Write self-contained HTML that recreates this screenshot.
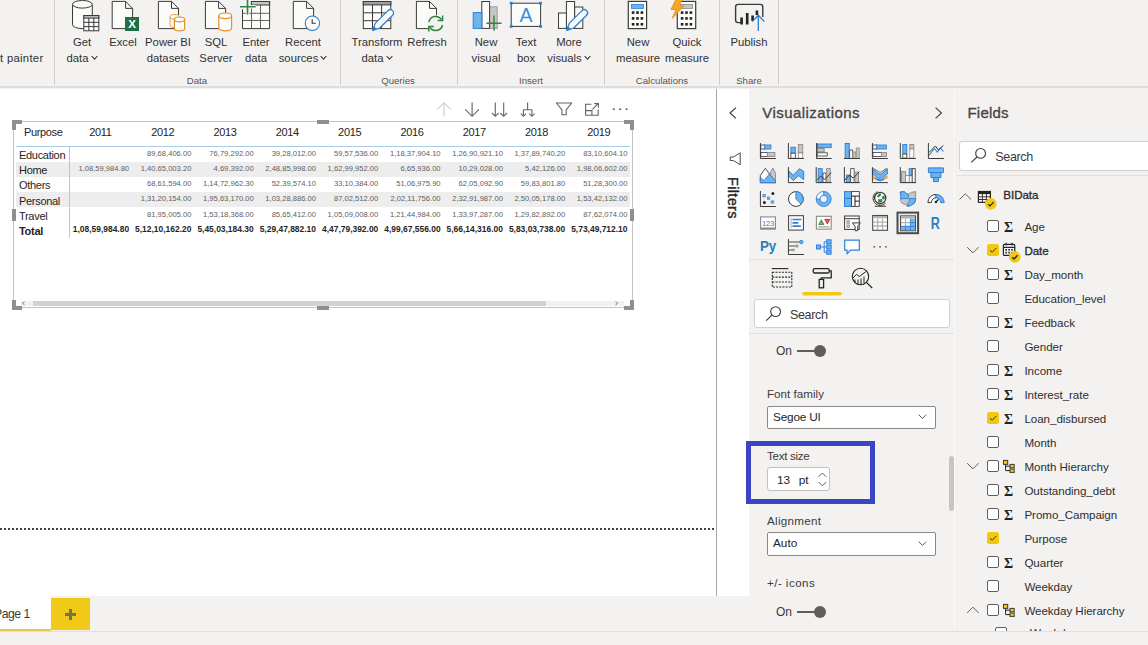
<!DOCTYPE html>
<html lang="en">
<head>
<meta charset="utf-8">
<title>Power BI Desktop</title>
<style>
*{box-sizing:border-box;margin:0;padding:0}
html,body{width:1148px;height:645px;overflow:hidden}
body{background:#f3f2f1;font-family:"Liberation Sans",sans-serif;color:#252423;position:relative;font-size:12px}
.abs{position:absolute}
/* ribbon */
#ribbon{position:absolute;left:0;top:0;width:1148px;height:88px;background:#f3f2f1;border-bottom:2px solid #dfdddb}
.rsep{position:absolute;top:0;width:1px;height:85px;background:#cfcdcb}
.rlbl{position:absolute;top:34px;width:90px;margin-left:-45px;text-align:center;font-size:11.3px;line-height:16px;color:#32312f;white-space:nowrap}
.glbl{position:absolute;top:75px;width:90px;margin-left:-45px;text-align:center;font-size:9.6px;line-height:12px;color:#55534f;white-space:nowrap}
.ric{position:absolute;top:0;overflow:visible}
.chev{display:inline-block;width:5px;height:5px;border-right:1.3px solid #2b2a29;border-bottom:1.3px solid #2b2a29;transform:rotate(45deg) scale(.9);margin:0 1px 3px 3px}
/* canvas */
#canvas{position:absolute;left:0;top:89px;width:716px;height:507px;background:#fff}

/* visual */
#vis{position:absolute;left:13px;top:32px;width:620px;height:187px;border:1px solid #c4c4c4}
.hd{position:absolute;background:#8f8f8f}
.mx{position:absolute;font-size:11px;line-height:15px;color:#252423;white-space:nowrap;letter-spacing:-.35px}
.yr{position:absolute;top:35px;width:62.3px;text-align:center;font-size:11px;line-height:15px;color:#252423;letter-spacing:-.35px}
.band{position:absolute;left:16px;width:614px;height:14.6px;background:#ededed}
.rl{position:absolute;left:19px;font-size:11px;line-height:15px;color:#252423;letter-spacing:-.3px;margin-top:1.3px}
.v{position:absolute;width:62.3px;text-align:right;font-size:7.6px;line-height:12px;color:#605e5c;white-space:nowrap;margin-top:.5px}
.v.t{font-weight:bold;color:#252423;font-size:8.45px;letter-spacing:0;margin-top:-.4px}
.vi{position:absolute;top:0;left:0;overflow:visible}

.ptitle{position:absolute;font-size:15px;line-height:18px;color:#484644;-webkit-text-stroke:.35px #484644;white-space:nowrap}
.hr{position:absolute;height:1px;background:#e3e1df}
.sbox{position:absolute;background:#fff;border:1px solid #d2d0ce;border-radius:3px}
.stxt{position:absolute;font-size:12.6px;line-height:16px;color:#3b3a39;white-space:nowrap;letter-spacing:-.4px;margin-top:1px}
.lbl{position:absolute;left:18px;font-size:11.6px;line-height:14px;color:#3b3a39;white-space:nowrap;letter-spacing:-.1px}
.sel{position:absolute;left:18px;width:169px;height:23px;background:#fff;border:1px solid #8a8886;border-radius:2px;font-size:11.8px;line-height:21px;padding-left:5px;color:#252423}
.on{position:absolute;left:27px;font-size:12px;line-height:14px;color:#3b3a39}
.tgl{position:absolute;left:47.5px;width:24px;height:2px;background:#605e5c}
.tgl:after{content:"";position:absolute;left:17.3px;top:-5.2px;width:12.4px;height:12.4px;border-radius:50%;background:#605e5c}

.cb{position:absolute;width:11.6px;height:11.6px;border:1px solid #605e5c;border-radius:2px;background:#fff}
.cb.on{background:#f2c811;border-color:#f2c811}
.ft{position:absolute;left:68.4px;font-size:11.6px;line-height:14px;color:#252423;white-space:nowrap;letter-spacing:-.05px}
.ft.b{-webkit-text-stroke:.3px #252423}
.ft{color:#2f2e2d}
.sg{position:absolute;left:48px;margin-top:2.5px;font-family:"Liberation Serif",serif;font-weight:bold;font-size:14px;line-height:14px;color:#252423}
#cline{position:absolute;left:716px;top:89px;width:1px;height:507px;background:#a6a6a6}
#filters{position:absolute;left:717px;top:89px;width:32px;height:507px;background:#fff}
#viz{position:absolute;left:749px;top:89px;width:205px;height:542px;background:#f3f2f1}
#gap{position:absolute;left:953.6px;top:89px;width:1.8px;height:542px;background:#faf9f8}
#fields{position:absolute;left:956px;top:89px;width:192px;height:542px;background:#f3f2f1}
#tabs{position:absolute;left:0;top:596px;width:749px;height:35px;background:#f3f2f1}
#status{position:absolute;left:0;top:631px;width:1148px;height:14px;background:#f3f2f1;border-top:1px solid #e1dfdd}
</style>
</head>
<body>
<div id="ribbon">
<div class="rsep" style="left:54px"></div>
<div class="rsep" style="left:340px"></div>
<div class="rsep" style="left:457px"></div>
<div class="rsep" style="left:604px"></div>
<div class="rsep" style="left:719px"></div>
<div class="rsep" style="left:778px"></div>
<div class="rlbl" style="left:0px;top:50px;letter-spacing:.3px;text-align:left;margin-left:0">t painter</div>
<div class="rlbl" style="left:82px">Get<br>data<i class="chev"></i></div>
<div class="rlbl" style="left:123px">Excel</div>
<div class="rlbl" style="left:168px">Power BI<br>datasets</div>
<div class="rlbl" style="left:216px">SQL<br>Server</div>
<div class="rlbl" style="left:256px">Enter<br>data</div>
<div class="rlbl" style="left:303px">Recent<br>sources<i class="chev"></i></div>
<div class="rlbl" style="left:377px">Transform<br>data<i class="chev"></i></div>
<div class="rlbl" style="left:427px">Refresh</div>
<div class="rlbl" style="left:486px">New<br>visual</div>
<div class="rlbl" style="left:526px">Text<br>box</div>
<div class="rlbl" style="left:569px">More<br>visuals<i class="chev"></i></div>
<div class="rlbl" style="left:638px">New<br>measure</div>
<div class="rlbl" style="left:687px">Quick<br>measure</div>
<div class="rlbl" style="left:749px">Publish</div>
<div class="glbl" style="left:197px">Data</div>
<div class="glbl" style="left:398px">Queries</div>
<div class="glbl" style="left:531px">Insert</div>
<div class="glbl" style="left:662px">Calculations</div>
<div class="glbl" style="left:749px">Share</div>
<svg class="ric" style="left:0" width="1148" height="88" viewBox="0 0 1148 88" fill="none"><path d="M72.5 4.3V24.8A9.899999999999999 3.8 0 0 0 92.3 24.8V4.3" fill="#fbfbfa" stroke="#3b3a39" stroke-width="1"/><ellipse cx="82.4" cy="4.3" rx="9.899999999999999" ry="3.8" fill="#fbfbfa" stroke="#3b3a39" stroke-width="1"/><rect x="83.8" y="15.5" width="15.0" height="15.3" fill="#fbfbfa" stroke="#3b3a39"/><rect x="83.8" y="15.5" width="15.0" height="2.6" fill="#bebbb8" stroke="#3b3a39"/><path d="M88.8 18.1V30.8" stroke="#3b3a39"/><path d="M93.8 18.1V30.8" stroke="#3b3a39"/><path d="M83.8 22.3H98.8" stroke="#3b3a39"/><path d="M83.8 26.6H98.8" stroke="#3b3a39"/><path d="M112.2 1.4H125.6L132.6 8.4V28.6H112.2Z" fill="#fbfbfa" stroke="#3b3a39"/><path d="M125.6 1.4V8.4H132.6" fill="none" stroke="#3b3a39"/><rect x="125" y="17" width="14" height="14" fill="#1e7145"/><text x="132" y="28.3" font-family="Liberation Sans,sans-serif" font-weight="bold" font-size="11.5" fill="#fff" text-anchor="middle">X</text><path d="M158.4 1.4H171.5L178.5 8.4V28.6H158.4Z" fill="#fbfbfa" stroke="#3b3a39"/><path d="M171.5 1.4V8.4H178.5" fill="none" stroke="#3b3a39"/><path d="M170 16.8V25.3A4.799999999999997 2.2 0 0 0 179.6 25.3V16.8" fill="#fbfbfa" stroke="#eb9a40" stroke-width="1"/><ellipse cx="174.8" cy="16.8" rx="4.799999999999997" ry="2.2" fill="#fbfbfa" stroke="#eb9a40" stroke-width="1"/><path d="M174.4 19.4V28.400000000000002A5.099999999999994 2.4 0 0 0 184.6 28.400000000000002V19.4" fill="#fbfbfa" stroke="#e8912d" stroke-width="1.2"/><ellipse cx="179.5" cy="19.4" rx="5.099999999999994" ry="2.4" fill="#fbfbfa" stroke="#e8912d" stroke-width="1.2"/><path d="M205.4 1.4H218.6L225.6 8.4V28.6H205.4Z" fill="#fbfbfa" stroke="#3b3a39"/><path d="M218.6 1.4V8.4H225.6" fill="none" stroke="#3b3a39"/><path d="M218.8 15.8V28.0A6.3999999999999915 2.8 0 0 0 231.6 28.0V15.8" fill="#fbfbfa" stroke="#e8912d" stroke-width="1.2"/><ellipse cx="225.2" cy="15.8" rx="6.3999999999999915" ry="2.8" fill="#fbfbfa" stroke="#e8912d" stroke-width="1.2"/><path d="M251 1.5H269.6V28.6H242.5V9.2" fill="#fbfbfa" stroke="#3b3a39"/><rect x="251.3" y="1.5" width="18.3" height="3.5" fill="#c8c6c4" stroke="#3b3a39"/><path d="M251.5 5V28.6M260.5 5V28.6M242.5 13.3H269.6M242.5 20.5H269.6" stroke="#55534f" stroke-width=".9"/><path d="M240 6.8H255.6M247.5 -1V14.6" stroke="#f3f2f1" stroke-width="3.6" fill="none"/><path d="M240 6.8H255.6M247.5 -1V14.6" stroke="#2e8540" stroke-width="1.6" fill="none"/><path d="M293.3 1.4H306.6L313.6 8.4V28.6H293.3Z" fill="#fbfbfa" stroke="#3b3a39"/><path d="M306.6 1.4V8.4H313.6" fill="none" stroke="#3b3a39"/><circle cx="312.4" cy="23.2" r="7.2" fill="#fbfbfa" stroke="#2f80c0" stroke-width="1.1"/><path d="M312.2 19.2V23.2H315.8" stroke="#3b3a39" stroke-width="1.1" fill="none"/><rect x="363.3" y="1.5" width="27.5" height="27.1" fill="#fbfbfa" stroke="#3b3a39"/><rect x="363.3" y="1.5" width="27.5" height="3.4" fill="#a19f9d" stroke="#3b3a39"/><path d="M372.5 4.9V28.6" stroke="#3b3a39"/><path d="M381.6 4.9V28.6" stroke="#3b3a39"/><path d="M363.3 12.8H390.8" stroke="#3b3a39"/><path d="M363.3 20.7H390.8" stroke="#3b3a39"/><path d="M372.8 30.3L379.7 28.0L392.6 15.2A3.2 3.2 0 0 0 388.0 10.6L375.2 23.4Z" fill="#fbfbfa" stroke="#2f7ed8" stroke-width="1.3" stroke-linejoin="round"/><path d="M372.8 30.3L376.3 29.0L374.1 26.8Z" fill="#2f7ed8" stroke="#2f7ed8" stroke-width="1"/><path d="M416.4 1.4H429.5L436.5 8.4V28.6H416.4Z" fill="#fbfbfa" stroke="#3b3a39"/><path d="M429.5 1.4V8.4H436.5" fill="none" stroke="#3b3a39"/><circle cx="435.7" cy="23.5" r="8.6" fill="#f3f2f1"/><path d="M428.9 22A7 7 0 0 1 441.6 19.6" stroke="#2e8540" stroke-width="1.5" fill="none"/><path d="M442.6 15.6V20.6H437.6" stroke="#2e8540" stroke-width="1.5" fill="none"/><path d="M442.5 25A7 7 0 0 1 429.8 27.4" stroke="#2e8540" stroke-width="1.5" fill="none"/><path d="M428.8 31.4V26.4H433.8" stroke="#2e8540" stroke-width="1.5" fill="none"/><rect x="489.4" y="6.8" width="7.8" height="21.6" fill="#c8c6c4" stroke="#a19f9d"/><rect x="481.8" y="1.5" width="7.8" height="26.9" fill="#fbfbfa" stroke="#3b3a39"/><rect x="473.2" y="12.6" width="8.6" height="15.8" fill="#6cb4ee" stroke="#2f7ed8"/><path d="M486.4 23.2H501.6M494 15.6V30.799999999999997" stroke="#2e8540" stroke-width="1.4" fill="none"/><rect x="511.2" y="3.2" width="29.4" height="23.2" fill="#fbfbfa" stroke="#3b3a39"/><rect x="509.8" y="1.8000000000000003" width="2.8" height="2.8" fill="#2f7ed8"/><rect x="539.2" y="1.8000000000000003" width="2.8" height="2.8" fill="#2f7ed8"/><rect x="509.8" y="25.0" width="2.8" height="2.8" fill="#2f7ed8"/><rect x="539.2" y="25.0" width="2.8" height="2.8" fill="#2f7ed8"/><text x="525.9" y="21.8" font-family="Liberation Sans,sans-serif" font-size="19.5" fill="#3a8ddb" text-anchor="middle">A</text><rect x="574.6" y="7" width="8.2" height="21.4" fill="#fbfbfa" stroke="#3b3a39"/><rect x="558.5" y="13" width="8" height="15.4" fill="#fbfbfa" stroke="#3b3a39"/><rect x="566.4" y="1.5" width="8.2" height="26.9" fill="#fbfbfa" stroke="#3b3a39"/><path d="M566.8 30.3L573.7 28.0L586.6 15.2A3.2 3.2 0 0 0 582.0 10.6L569.2 23.4Z" fill="#fbfbfa" stroke="#2f7ed8" stroke-width="1.3" stroke-linejoin="round"/><path d="M566.8 30.3L570.3 29.0L568.1 26.8Z" fill="#2f7ed8" stroke="#2f7ed8" stroke-width="1"/><rect x="628.3" y="1.4" width="18.300000000000068" height="27.200000000000003" fill="#fbfbfa" stroke="#3b3a39" stroke-width="1.2"/><rect x="631.5" y="4.4" width="11.900000000000068" height="4" fill="#6cb4ee" stroke="#2f7ed8" stroke-width="0.8"/><rect x="631.8" y="11.3" width="2.6" height="2.6" fill="#252423"/><rect x="631.8" y="17.1" width="2.6" height="2.6" fill="#252423"/><rect x="631.8" y="23.0" width="2.6" height="2.6" fill="#252423"/><rect x="636.2" y="11.3" width="2.6" height="2.6" fill="#252423"/><rect x="636.2" y="17.1" width="2.6" height="2.6" fill="#252423"/><rect x="636.2" y="23.0" width="2.6" height="2.6" fill="#252423"/><rect x="640.6" y="11.3" width="2.6" height="2.6" fill="#252423"/><rect x="640.6" y="17.1" width="2.6" height="2.6" fill="#252423"/><rect x="640.6" y="23.0" width="2.6" height="2.6" fill="#252423"/><rect x="677.3" y="1.4" width="18.40000000000009" height="27.200000000000003" fill="#fbfbfa" stroke="#3b3a39" stroke-width="1.2"/><rect x="680.5" y="4.4" width="12.00000000000009" height="4" fill="#c8c6c4" stroke="#8a8886" stroke-width="0.8"/><rect x="680.8" y="11.3" width="2.6" height="2.6" fill="#252423"/><rect x="680.8" y="17.1" width="2.6" height="2.6" fill="#252423"/><rect x="680.8" y="23.0" width="2.6" height="2.6" fill="#252423"/><rect x="685.2" y="11.3" width="2.6" height="2.6" fill="#252423"/><rect x="685.2" y="17.1" width="2.6" height="2.6" fill="#252423"/><rect x="685.2" y="23.0" width="2.6" height="2.6" fill="#252423"/><rect x="689.6" y="11.3" width="2.6" height="2.6" fill="#252423"/><rect x="689.6" y="17.1" width="2.6" height="2.6" fill="#252423"/><rect x="689.6" y="23.0" width="2.6" height="2.6" fill="#252423"/><path d="M676 -1L671 9.5H676L672.2 18.5L684 6H678.5L683 -1Z" fill="#f5a623" stroke="#e08a1e" stroke-width="0.8" stroke-linejoin="round"/><path d="M741 22.6H738.2A2.6 2.6 0 0 1 735.6 20V7A2.6 2.6 0 0 1 738.2 4.4H760.2A2.6 2.6 0 0 1 762.8 7V17" stroke="#3b3a39" stroke-width="1.4" fill="none"/><path d="M741.6 17.4V24.4M747.2 13V24.4M752.6 15.6V21" stroke="#252423" stroke-width="2.6" fill="none"/><path d="M756.9 10.5V15" stroke="#252423" stroke-width="2.6" fill="none"/><path d="M758.3 31V15.5M752.2 21.6L758.3 15.2L764.4 21.6" stroke="#2b7cc4" stroke-width="1.3" fill="none"/></svg></div>
<div id="canvas"><div id="vis"></div><div class="hd" style="left:12px;top:31px;width:10px;height:4px"></div><div class="hd" style="left:12px;top:31px;width:4px;height:10px"></div><div class="hd" style="left:624px;top:31px;width:10px;height:4px"></div><div class="hd" style="left:630px;top:31px;width:4px;height:10px"></div><div class="hd" style="left:12px;top:217px;width:10px;height:4px"></div><div class="hd" style="left:12px;top:211px;width:4px;height:10px"></div><div class="hd" style="left:624px;top:217px;width:10px;height:4px"></div><div class="hd" style="left:630px;top:211px;width:4px;height:10px"></div><div class="hd" style="left:317px;top:31px;width:12px;height:4px"></div><div class="hd" style="left:317px;top:217px;width:12px;height:4px"></div><div class="hd" style="left:12px;top:120px;width:4px;height:12px"></div><div class="hd" style="left:630px;top:120px;width:4px;height:12px"></div><div class="mx" style="left:24px;top:36px">Purpose</div><div class="yr" style="left:69.3px;top:36px">2011</div><div class="yr" style="left:131.6px;top:36px">2012</div><div class="yr" style="left:193.9px;top:36px">2013</div><div class="yr" style="left:256.2px;top:36px">2014</div><div class="yr" style="left:318.5px;top:36px">2015</div><div class="yr" style="left:380.8px;top:36px">2016</div><div class="yr" style="left:443.1px;top:36px">2017</div><div class="yr" style="left:505.4px;top:36px">2018</div><div class="yr" style="left:567.7px;top:36px">2019</div><div class="abs" style="left:16px;top:57px;width:614px;height:1px;background:#a9cbea"></div><div class="band" style="top:73px"></div><div class="band" style="top:103.4px"></div><div class="abs" style="left:69px;top:57px;width:1px;height:91.6px;background:#a9cbea"></div><div class="rl" style="top:57.8px">Education</div><div class="v" style="left:129.1px;top:58.3px">89,68,406.00</div><div class="v" style="left:191.4px;top:58.3px">76,79,292.00</div><div class="v" style="left:253.7px;top:58.3px">39,28,012.00</div><div class="v" style="left:316.0px;top:58.3px">59,57,536.00</div><div class="v" style="left:378.3px;top:58.3px">1,18,37,904.10</div><div class="v" style="left:440.6px;top:58.3px">1,26,90,921.10</div><div class="v" style="left:502.9px;top:58.3px">1,37,89,740.20</div><div class="v" style="left:565.2px;top:58.3px">83,10,604.10</div><div class="rl" style="top:73.0px">Home</div><div class="v" style="left:66.8px;top:73.5px">1,08,59,984.80</div><div class="v" style="left:129.1px;top:73.5px">1,40,65,003.20</div><div class="v" style="left:191.4px;top:73.5px">4,69,392.00</div><div class="v" style="left:253.7px;top:73.5px">2,48,85,998.00</div><div class="v" style="left:316.0px;top:73.5px">1,62,99,952.00</div><div class="v" style="left:378.3px;top:73.5px">6,65,936.00</div><div class="v" style="left:440.6px;top:73.5px">10,29,028.00</div><div class="v" style="left:502.9px;top:73.5px">5,42,126.00</div><div class="v" style="left:565.2px;top:73.5px">1,98,06,602.00</div><div class="rl" style="top:88.2px">Others</div><div class="v" style="left:129.1px;top:88.7px">68,61,594.00</div><div class="v" style="left:191.4px;top:88.7px">1,14,72,962.30</div><div class="v" style="left:253.7px;top:88.7px">52,39,574.10</div><div class="v" style="left:316.0px;top:88.7px">33,10,384.00</div><div class="v" style="left:378.3px;top:88.7px">51,06,975.90</div><div class="v" style="left:440.6px;top:88.7px">62,05,092.90</div><div class="v" style="left:502.9px;top:88.7px">59,83,801.80</div><div class="v" style="left:565.2px;top:88.7px">51,28,300.00</div><div class="rl" style="top:103.4px">Personal</div><div class="v" style="left:129.1px;top:103.9px">1,31,20,154.00</div><div class="v" style="left:191.4px;top:103.9px">1,95,63,170.00</div><div class="v" style="left:253.7px;top:103.9px">1,03,28,886.00</div><div class="v" style="left:316.0px;top:103.9px">87,02,512.00</div><div class="v" style="left:378.3px;top:103.9px">2,02,11,756.00</div><div class="v" style="left:440.6px;top:103.9px">2,32,91,987.00</div><div class="v" style="left:502.9px;top:103.9px">2,50,05,178.00</div><div class="v" style="left:565.2px;top:103.9px">1,53,42,132.00</div><div class="rl" style="top:118.6px">Travel</div><div class="v" style="left:129.1px;top:119.1px">81,95,005.00</div><div class="v" style="left:191.4px;top:119.1px">1,53,18,368.00</div><div class="v" style="left:253.7px;top:119.1px">85,65,412.00</div><div class="v" style="left:316.0px;top:119.1px">1,05,09,008.00</div><div class="v" style="left:378.3px;top:119.1px">1,21,44,984.00</div><div class="v" style="left:440.6px;top:119.1px">1,33,97,287.00</div><div class="v" style="left:502.9px;top:119.1px">1,29,82,892.00</div><div class="v" style="left:565.2px;top:119.1px">87,62,074.00</div><div class="rl" style="font-weight:bold;top:133.8px">Total</div><div class="v t" style="left:66.8px;top:134.3px">1,08,59,984.80</div><div class="v t" style="left:129.1px;top:134.3px">5,12,10,162.20</div><div class="v t" style="left:191.4px;top:134.3px">5,45,03,184.30</div><div class="v t" style="left:253.7px;top:134.3px">5,29,47,882.10</div><div class="v t" style="left:316.0px;top:134.3px">4,47,79,392.00</div><div class="v t" style="left:378.3px;top:134.3px">4,99,67,556.00</div><div class="v t" style="left:440.6px;top:134.3px">5,66,14,316.00</div><div class="v t" style="left:502.9px;top:134.3px">5,83,03,738.00</div><div class="v t" style="left:565.2px;top:134.3px">5,73,49,712.10</div><div class="abs" style="left:21px;top:211.5px;width:603px;height:5.5px;background:#f1f1f1"></div><div class="abs" style="left:32.5px;top:211.5px;width:513px;height:5.5px;background:#d2d2d2"></div><svg class="vi" width="716" height="40" viewBox="0 0 716 40" fill="none" stroke="#67645f" stroke-width="1.1"><path d="M444.1 27.6V14M437.2 20.6L444.1 13.7L451 20.6" stroke="#cfcdcb"/><path d="M472.1 13.4V27M465.2 20.4L472.1 27.3L479 20.4"/><path d="M495.3 13.4V27M492.0 24L495.3 27.3L498.6 24"/><path d="M503.7 13.4V27M500.4 24L503.7 27.3L507.0 24"/><path d="M527.6 13.4V20.7M523.4 27V20.7H531.9V27"/><path d="M520.8 24.7L523.4 27.3L526.0 24.7"/><path d="M529.3 24.7L531.9 27.3L534.5 24.7"/><path d="M556.3 14H571.8L566.2 20.9V25.8H562V20.9Z" stroke-linejoin="round"/><path d="M591.5 15.3H585.6V26.2H598.2V20.6M585.6 21.6H591.9V26.2M592.4 20.4L598.2 14.6M594.2 14.6H598.4V18.8"/><rect x="612.9" y="19.3" width="1.8" height="1.8" fill="#67645f" stroke="none"/><rect x="619.3000000000001" y="19.3" width="1.8" height="1.8" fill="#67645f" stroke="none"/><rect x="625.7" y="19.3" width="1.8" height="1.8" fill="#67645f" stroke="none"/></svg><svg class="vi" width="716" height="230" viewBox="0 0 716 230" fill="none" stroke="#605e5c" stroke-width="0.8"><path d="M24.6 212.6L22.6 214.3L24.6 216M615.6 212.6L617.6 214.3L615.6 216"/></svg><div class="abs" style="left:0;top:439px;width:714px;height:2px;background:repeating-linear-gradient(90deg,#404040 0 2px,transparent 2px 4px)"></div></div>
<div id="cline"></div>
<div id="filters"><svg class="vi" width="32" height="130" viewBox="717 89 32 130" fill="none" stroke="#3b3a39" stroke-width="1.2"><path d="M736 107.6L730 113L736 118.4"/><path d="M740.2 152.8V164.8L733.6 160.6H730.2V157H733.6Z" stroke="#4a4846" stroke-width="1" stroke-linejoin="round"/></svg>
<div class="abs" style="left:16px;top:88px;width:0;height:0"><div style="position:absolute;left:0;top:0;transform-origin:0 0;transform:rotate(90deg) translate(0,-50%);font-size:14.6px;line-height:16px;white-space:nowrap;color:#252423;-webkit-text-stroke:.35px #252423;letter-spacing:.3px">Filters</div></div></div>
<div id="viz"><div class="ptitle" style="left:13.2px;top:15.1px;letter-spacing:.46px">Visualizations</div><svg class="vi" width="205" height="60" viewBox="749 89 205 60" fill="none" stroke="#484644" stroke-width="1.2"><path d="M935.6 107.6L941.4 113L935.6 118.4"/></svg><svg class="vi" width="205" height="180" viewBox="749 89 205 180" fill="none"><g transform="translate(759.9 143.0)"><rect x="1" y="2" width="4" height="4" fill="#ffffff" stroke="#3b3a39" stroke-width=".8"/><rect x="4.5" y="2" width="6.5" height="4" fill="#6cb4ee" stroke="#2f7ed8" stroke-width=".9"/><rect x="1" y="9.5" width="7" height="4" fill="#ffffff" stroke="#3b3a39" stroke-width=".8"/><rect x="7.5" y="9.5" width="7.5" height="4" fill="#c8c6c4" stroke="#8a8886" stroke-width=".9"/><path d="M.5 0V15.5H16" stroke="#3b3a39" fill="none"/></g><g transform="translate(787.9 143.0)"><rect x="3" y="4.2" width="4.4" height="6" fill="#6cb4ee" stroke="#2f7ed8" stroke-width=".9"/><rect x="3" y="10.2" width="4.4" height="5" fill="#ffffff" stroke="#3b3a39" stroke-width=".8"/><rect x="10.4" y="1.6" width="4.4" height="8.4" fill="#c8c6c4" stroke="#8a8886" stroke-width=".9"/><rect x="10.4" y="10" width="4.4" height="5.2" fill="#ffffff" stroke="#8a8886" stroke-width=".8"/><path d="M.5 0V15.5H16" stroke="#3b3a39" fill="none"/></g><g transform="translate(815.7 143.0)"><rect x="1.5" y="1" width="14" height="3.6" fill="#6cb4ee" stroke="#2f7ed8" stroke-width=".9"/><rect x="1.5" y="5.6" width="7" height="3.2" fill="#c8c6c4" stroke="#8a8886" stroke-width=".9"/><rect x="1.5" y="9.8" width="10" height="3.2" fill="#ffffff" stroke="#3b3a39" stroke-width=".8"/><path d="M1 0V15.5M.5 15.5H16" stroke="#3b3a39" fill="none" stroke-width="1.2"/></g><g transform="translate(843.9 143.0)"><rect x="1.3" y=".5" width="4" height="15" fill="#6cb4ee" stroke="#2f7ed8" stroke-width="1"/><rect x="5.8" y="7" width="3" height="8.5" fill="#ffffff" stroke="#3b3a39" stroke-width=".8"/><rect x="9" y="9" width="3" height="6.5" fill="#c8c6c4" stroke="#8a8886" stroke-width=".8"/><rect x="12.3" y="5" width="3" height="10.5" fill="#c8c6c4" stroke="#8a8886" stroke-width=".8"/><path d="M0 15.5H16" stroke="#3b3a39" fill="none"/></g><g transform="translate(871.9 143.0)"><rect x="1" y="2" width="4" height="4" fill="#ffffff" stroke="#3b3a39" stroke-width=".8"/><rect x="4.5" y="2" width="10" height="4" fill="#6cb4ee" stroke="#2f7ed8" stroke-width=".9"/><rect x="1" y="9.5" width="9" height="4" fill="#ffffff" stroke="#3b3a39" stroke-width=".8"/><rect x="9.5" y="9.5" width="5" height="4" fill="#c8c6c4" stroke="#8a8886" stroke-width=".9"/><path d="M.5 0V15.5H16" stroke="#3b3a39" fill="none"/></g><g transform="translate(899.8 143.0)"><rect x="3" y="1.5" width="4" height="9.5" fill="#6cb4ee" stroke="#2f7ed8" stroke-width=".9"/><rect x="3" y="11" width="4" height="4" fill="#ffffff" stroke="#3b3a39" stroke-width=".8"/><rect x="10" y="1.5" width="4" height="4.5" fill="#c8c6c4" stroke="#8a8886" stroke-width=".9"/><rect x="10" y="6" width="4" height="9" fill="#ffffff" stroke="#8a8886" stroke-width=".8"/><path d="M.5 0V15.5H16" stroke="#3b3a39" fill="none"/></g><g transform="translate(927.9 143.0)"><path d="M1 12.5L6.5 5.5L9.5 9L12.5 5L15.5 8.5" stroke="#2f7ed8" fill="none" stroke-width="1.1"/><path d="M1 9.5L7.5 3L10.5 7L13 4.5L15.5 2.5" stroke="#3b3a39" fill="none" stroke-width="1"/><path d="M.5 0V15.5H16" stroke="#3b3a39" fill="none"/></g><g transform="translate(759.9 167.1)"><path d="M10.3 5.8L13 .9L15.6 6V15.6H10.3Z" fill="#c8c6c4" stroke="#8a8886" stroke-width=".9"/><path d="M.4 8.4L5.5 1.2L15.6 15.6H.4Z" fill="#ffffff" stroke="#3b3a39" stroke-width=".9" stroke-linejoin="round"/><path d="M.4 10.4L4.2 13.4L9.5 6.9L15.6 13.8V15.6H.4Z" fill="#6cb4ee" stroke="#2f7ed8" stroke-width=".9" stroke-linejoin="round"/></g><g transform="translate(787.9 167.1)"><path d="M.8 3.8L5.4 8.2L11.5 1.6L15.8 4.3V12.5L10.7 8.6L5.4 13.4L.8 9Z" fill="#6cb4ee" stroke="#2f7ed8" stroke-width="1" stroke-linejoin="round"/><path d="M.5 0V15.5H16" stroke="#3b3a39" fill="none"/></g><g transform="translate(815.7 167.1)"><rect x="2.5" y="1.5" width="4" height="14" fill="#6cb4ee" stroke="#2f7ed8" stroke-width=".9"/><rect x="7.3" y="6" width="3" height="9.5" fill="#ffffff" stroke="#3b3a39" stroke-width=".8"/><rect x="11" y="1.5" width="3.5" height="14" fill="#c8c6c4" stroke="#8a8886" stroke-width=".9"/><path d="M1 13L5 9L9 12.5L15.5 5.5" stroke="#3b3a39" fill="none" stroke-width="1"/><path d="M.5 0V15.5H16" stroke="#3b3a39" fill="none"/></g><g transform="translate(843.9 167.1)"><rect x="2.5" y="8" width="3.6" height="7.5" fill="#6cb4ee" stroke="#2f7ed8" stroke-width=".9"/><rect x="6.8" y="1.5" width="3.4" height="14" fill="#ffffff" stroke="#3b3a39" stroke-width=".8"/><rect x="11" y="5" width="3.6" height="10.5" fill="#c8c6c4" stroke="#8a8886" stroke-width=".9"/><path d="M1 13L5.5 8L9.5 11L15.5 4.5" stroke="#3b3a39" fill="none" stroke-width="1"/><path d="M.5 0V15.5H16" stroke="#3b3a39" fill="none"/></g><g transform="translate(871.9 167.1)"><rect x="1.2" y="9.3" width="3" height="3" fill="#f0a030"/><rect x="12.4" y="8.6" width="3.2" height="3" fill="#f0a030"/><path d="M1 2.5C4 3 5 7 8.5 7S13 2.5 15.5 2V7C13 7.5 12 11.5 8.5 11.5S4 8 1 7.5Z" fill="#6cb4ee" stroke="#2f7ed8" stroke-width=".9"/><path d="M1 1.6C4 1.8 5.5 5 8.5 5S13 1.4 15.5 1.2" fill="none" stroke="#8a8886" stroke-width="1.3"/><path d="M4 11.5C5.5 12.6 7 13.2 8.5 13.2S11.5 12.6 12.6 11.4" fill="none" stroke="#2f7ed8" stroke-width="1.8"/><path d="M.5 0V15.5H16" stroke="#3b3a39" fill="none"/></g><g transform="translate(899.8 167.1)"><rect x="1.8" y="4.5" width="4" height="11" fill="#c8c6c4" stroke="#8a8886" stroke-width=".9"/><rect x="5.8" y="8.5" width="3.6" height="7" fill="#ffffff" stroke="#8a8886" stroke-width=".9"/><rect x="9.4" y="1.5" width="3" height="7" fill="#6cb4ee" stroke="#2f7ed8" stroke-width=".9"/><rect x="12.4" y="1.5" width="3" height="14" fill="#ffffff" stroke="#3b3a39" stroke-width=".9"/><path d="M.5 0V15.5H16" stroke="#3b3a39" fill="none"/></g><g transform="translate(927.9 167.1)"><path d="M.5 .8H15.5V5.5H.5Z" fill="#6cb4ee" stroke="#2f7ed8"/><path d="M3 5.5H13V10.5H3Z" fill="#6cb4ee" stroke="#2f7ed8"/><path d="M5.5 10.5H10.5V14.5H5.5Z" fill="#6cb4ee" stroke="#2f7ed8"/></g><g transform="translate(759.9 191.0)"><path d="M.5 0V15.5H16" stroke="#3b3a39" fill="none"/><circle cx="13" cy="2.5" r="1.5" fill="#252423"/><circle cx="4.5" cy="11.5" r="1.5" fill="#252423"/><rect x="3" y="3.5" width="2.4" height="2.4" fill="#6cb4ee" stroke="#2f7ed8" stroke-width=".6"/><rect x="7.5" y="6" width="2.4" height="2.4" fill="#6cb4ee" stroke="#2f7ed8" stroke-width=".6"/><circle cx="12.5" cy="11" r="1.6" fill="#6cb4ee" stroke="#2f7ed8" stroke-width=".6"/></g><g transform="translate(787.9 191.0)"><circle cx="8" cy="8" r="7.4" fill="#ffffff" stroke="#3b3a39" stroke-width="1"/><path d="M8 .6A7.4 7.4 0 0 1 13.2 13.2L8 8Z" fill="#6cb4ee" stroke="#2f7ed8" stroke-width=".9"/></g><g transform="translate(815.7 191.0)"><circle cx="8" cy="8" r="5.6" fill="none" stroke="#6cb4ee" stroke-width="3.6"/><circle cx="8" cy="8" r="7.5" fill="none" stroke="#2f7ed8" stroke-width=".9"/><circle cx="8" cy="8" r="3.7" fill="none" stroke="#2f7ed8" stroke-width=".9"/><path d="M8 2.4A5.6 5.6 0 0 0 2.4 8" fill="none" stroke="#ffffff" stroke-width="2.8"/><path d="M8 .5V4.3M.5 8H4.3" stroke="#2f7ed8" stroke-width=".9"/></g><g transform="translate(843.9 191.0)"><rect x=".6" y=".6" width="7" height="6.8" fill="#6cb4ee" stroke="#2f7ed8"/><rect x=".6" y="7.4" width="7" height="8" fill="#6cb4ee" stroke="#2f7ed8"/><rect x="7.6" y=".6" width="7.8" height="4.6" fill="#ffffff" stroke="#3b3a39" stroke-width=".9"/><rect x="7.6" y="5.2" width="3.6" height="10.2" fill="#ffffff" stroke="#3b3a39" stroke-width=".9"/><rect x="11.2" y="5.2" width="4.2" height="5" fill="#ffffff" stroke="#3b3a39" stroke-width=".9"/><rect x="11.2" y="10.2" width="4.2" height="5.2" fill="#ffffff" stroke="#3b3a39" stroke-width=".9"/></g><g transform="translate(871.9 191.0)"><circle cx="8.3" cy="7" r="5.6" fill="#fff" stroke="#3b3a39" stroke-width="1.3"/><path d="M5 5.5L7 2.6L9.5 2.8L8.6 5L6.6 6.4ZM9.6 5.8L12.6 4.6L13 8.2L10.8 8.6ZM6.4 8.2L10 8L10.6 10.6L8 11.8L6 10.4Z" fill="#2d8a3e"/><path d="M5.5 .6A7.4 7.4 0 0 0 3.4 12.6A7.4 7.4 0 0 0 13.6 12.2" fill="none" stroke="#3b3a39" stroke-width="1"/><path d="M8 13.4V15.2M2.8 15.3H14" stroke="#3b3a39" stroke-width="1.1"/></g><g transform="translate(899.8 191.0)"><path d="M.4 1L4.5 .6L6 2.2L8.6 3.4L11.5 1.4L15.8 .6V9L14.6 12.2L11 14.4L8 15.4L5.5 13.5L2.4 12.4L.6 9.6L1.2 5.6Z" fill="#c8c6c4" stroke="#8a8886" stroke-width=".9"/><path d="M.4 1L4.5 .6L6 2.2L8.6 3.4L8.4 7.6H.9L1.2 5.6Z" fill="#6cb4ee" stroke="#2f7ed8" stroke-width=".9"/><path d="M9.6 7.6H15.8V9L14.6 12.2L11 14.4L8 15.4L7.6 12.6L9.4 10.4Z" fill="#6cb4ee" stroke="#2f7ed8" stroke-width=".9"/></g><g transform="translate(927.9 191.0)"><path d="M0 11.6A8.15 8.15 0 0 1 8.15 3.4V6.8A4.8 4.8 0 0 0 3.4 11.6Z" fill="#fff" stroke="#3b3a39" stroke-width="1"/><path d="M8.15 3.4A8.15 8.15 0 0 1 16.3 11.6H12.9A4.8 4.8 0 0 0 8.15 6.8Z" fill="#6cb4ee" stroke="#2f7ed8" stroke-width="1"/><path d="M7.8 11.2L10.6 8.4" stroke="#252423" stroke-width="1.3"/><circle cx="8" cy="11" r="1.2" fill="#252423"/></g><g transform="translate(759.9 214.7)"><rect x=".7" y="2.2" width="14.8" height="12.2" fill="#ffffff" stroke="#8a8886" stroke-width="1.1"/><path d="M.7 13.6H15.5" stroke="#8a8886" stroke-width="1.6"/><text x="8.1" y="11.2" font-family="Liberation Sans,sans-serif" font-size="7.6" fill="#2f7ed8" text-anchor="middle" letter-spacing="-.3">123</text></g><g transform="translate(787.9 214.7)"><rect x=".7" y="1" width="14.8" height="14.4" fill="#ffffff" stroke="#3b3a39" stroke-width="1"/><path d="M3.2 3V13.5" stroke="#c8c6c4" stroke-width="1.4"/><path d="M4.6 4.8H13.5M4.6 8.2H10.5M4.6 11.4H13" stroke="#2f7ed8" stroke-width="1.6"/></g><g transform="translate(815.7 214.7)"><rect x=".7" y="1.6" width="14.8" height="12.8" fill="#ffffff" stroke="#8a8886" stroke-width="1.1"/><path d="M2.5 12.2H13.8" stroke="#8a8886" stroke-width="1"/><path d="M3 9.8L5.6 5L8.2 9.8Z" fill="#5cb85c" stroke="#2d8a3e" stroke-width=".8"/><path d="M9 4.6H14.2L11.6 9.4Z" fill="#e8505b" stroke="#c4262e" stroke-width=".8"/></g><g transform="translate(843.9 214.7)"><rect x=".7" y="1.3" width="14.6" height="13.4" fill="#ffffff" stroke="#3b3a39" stroke-width="1"/><path d="M.7 4H15.3" stroke="#3b3a39" stroke-width="1"/><rect x="3" y="6" width="2.6" height="2.6" fill="#c8c6c4" stroke="#8a8886" stroke-width=".7"/><rect x="3" y="10.2" width="2.6" height="2.6" fill="#c8c6c4" stroke="#8a8886" stroke-width=".7"/><path d="M8.5 8.2H16.5L13.8 11.6V16H11.2V11.6Z" fill="#ffffff" stroke="#3b3a39" stroke-width="1" stroke-linejoin="round"/></g><g transform="translate(871.9 214.7)"><rect x=".8" y=".8" width="14.8" height="14.8" fill="#ffffff" stroke="#4a4a4a" stroke-width="1.1"/><rect x="1.3" y="1.3" width="13.8" height="2.2" fill="#b4b2b0"/><path d="M5.7 3.5V15.2M10.6 3.5V15.2M1.3 7.4H15.1M1.3 11.3H15.1" stroke="#b4b2b0" stroke-width="1.3"/></g><g transform="translate(899.8 214.7)"><g transform="translate(0 .7)"><rect x="-2.3" y="-2.8" width="20.6" height="20.6" fill="#ececec" stroke="#4a4a4a" stroke-width="2"/><rect x=".8" y=".5" width="14.8" height="14.8" fill="#ffffff" stroke="#4a4a4a" stroke-width="1.1"/><rect x="1.3" y="1" width="13.8" height="2.2" fill="#b4b2b0"/><rect x="10.6" y="3.4" width="4.5" height="11.4" fill="#6cb4ee"/><rect x="1.3" y="11" width="13.8" height="3.8" fill="#6cb4ee"/><path d="M5.7 3.4V11M1.3 7.2H10.6" stroke="#b4b2b0" stroke-width="1.2"/><path d="M10.6 3.4V14.8M5.7 11V14.8M1.3 11H15.1M10.6 7.2H15.1" stroke="#3f8fe0" stroke-width="1.1"/></g></g><g transform="translate(927.9 214.7)"><text transform="translate(7.4 14.1) scale(.8 1)" font-family="Liberation Sans,sans-serif" font-weight="bold" font-size="15.6" fill="#2b7cbd" text-anchor="middle">R</text></g><g transform="translate(759.9 239.0)"><text transform="translate(8 11.8) scale(.92 1)" font-family="Liberation Sans,sans-serif" font-weight="bold" font-size="14.6" fill="#2b7cbd" text-anchor="middle" letter-spacing="-.3">Py</text></g><g transform="translate(787.9 239.0)"><path d="M.5 0V15.5H16" stroke="#3b3a39" fill="none"/><path d="M.5 3H12M.5 7H8M.5 11H5" stroke="#3b3a39" stroke-width=".9"/><circle cx="13.4" cy="3" r="1.7" fill="#6cb4ee" stroke="#2f7ed8" stroke-width=".9"/><circle cx="9" cy="7" r="1.3" fill="#c8c6c4" stroke="#8a8886" stroke-width=".8"/><circle cx="5.5" cy="11" r="1.1" fill="#c8c6c4" stroke="#8a8886" stroke-width=".8"/></g><g transform="translate(815.7 239.0)"><path d="M4.5 8H8.5M8.5 2.8V13.2M8.5 2.8H11M8.5 8H11M8.5 13.2H11" stroke="#2f7ed8" stroke-width="1" fill="none"/><rect x=".8" y="6" width="4" height="4" fill="#6cb4ee" stroke="#2f7ed8"/><rect x="11" y=".8" width="4.4" height="4" fill="#6cb4ee" stroke="#2f7ed8"/><rect x="11" y="6" width="4.4" height="4" fill="#6cb4ee" stroke="#2f7ed8"/><rect x="11" y="11.2" width="4.4" height="4" fill="#6cb4ee" stroke="#2f7ed8"/></g><g transform="translate(843.9 239.0)"><path d="M.8 1.2H15.4V11.2H6.5L3.2 14.8V11.2H.8Z" fill="#ffffff" stroke="#2f7ed8" stroke-width="1.2" stroke-linejoin="round"/></g><g transform="translate(871.9 239.0)"><rect x="1.6" y="7" width="1.6" height="1.6" fill="#605e5c"/><rect x="7.4" y="7" width="1.6" height="1.6" fill="#605e5c"/><rect x="13.2" y="7" width="1.6" height="1.6" fill="#605e5c"/></g></svg><div class="hr" style="left:0;top:170px;width:205px"></div><div class="sbox" style="left:5.4px;top:210px;width:195.6px;height:29.4px"></div><div class="stxt" style="left:41px;top:217.4px">Search</div><div class="hr" style="left:0;top:244.3px;width:205px"></div><div class="on" style="top:254.8px">On</div><div class="tgl" style="top:261px"></div><div class="lbl" style="top:298px;letter-spacing:.03px">Font family</div><div class="sel" style="top:316.5px;letter-spacing:-.2px">Segoe UI</div><div class="lbl" style="top:359.6px;letter-spacing:-.3px">Text size</div><div class="sel" style="top:378.3px;width:62.6px;height:23.4px;padding-left:9px;padding-top:1.6px;border-color:#c2c0be;border-radius:3px">13<span style="margin-left:8.6px">pt</span></div><div class="lbl" style="top:424.6px;letter-spacing:.3px">Alignment</div><div class="sel" style="top:443.3px;height:23.5px">Auto</div><div class="lbl" style="top:487.3px;letter-spacing:.45px">+/- icons</div><div class="on" style="top:515.6px">On</div><div class="tgl" style="top:522px"></div><svg class="vi" width="205" height="250" viewBox="749 89 205 250" fill="none" stroke="#252423" stroke-width="1.1"><path d="M771.8 268.6H788.4"/><path d="M772.3 272.2H791.8V287H772.3ZM772.3 277.1H791.8M772.3 282H791.8" stroke-dasharray="2 1.2" stroke-width="1.1"/><rect x="813.2" y="268.6" width="16" height="4.4" rx="1.6" stroke-width="1.3"/><path d="M829.2 270.8H831.2V277.8H821.3V279.4" stroke-width="1.3"/><rect x="819.2" y="279.4" width="4.4" height="8.4" stroke-width="1.3"/><circle cx="860.5" cy="276.5" r="8.2"/><path d="M866.4 282.4L872.2 288" stroke-width="1.3"/><path d="M853 278L856.5 274.5L859.5 276.5L866 271.5" stroke-width="1"/><path d="M855 279.5V283M858 279.5V284.5M861 278.5V284.8M864 276.5V283.5" stroke-width="1"/><rect x="802.2" y="292" width="39.6" height="3.6" rx="1.8" fill="#f2c811" stroke="none"/><circle cx="775.6" cy="311.6" r="4.9" stroke="#3b3a39" stroke-width="1.1"/><path d="M772 315.2L766.2 320.6" stroke="#3b3a39" stroke-width="1.1"/><path d="M918.6 414.6L922.4 418.4L926.2 414.6M918.6 541.6L922.4 545.4L926.2 541.6" stroke="#605e5c" stroke-width="1"/><path d="M818.6 476.8L822.4 473L826.2 476.8M818.6 482L822.4 485.8L826.2 482" stroke="#605e5c" stroke-width="1"/></svg><div class="abs" style="left:199.6px;top:367px;width:5px;height:55px;background:#c8c6c4;border-radius:3px"></div></div>
<div id="gap"></div>
<div id="fields" style="overflow:hidden"><div class="ptitle" style="left:11.5px;top:15.1px;letter-spacing:.2px">Fields</div><div class="sbox" style="left:2.8px;top:52.2px;width:200px;height:30px"></div><div class="stxt" style="left:39.3px;top:59.2px">Search</div><div class="hr" style="left:0;top:86.2px;width:192px"></div><div class="ft b" style="left:47.3px;top:99.3px">BIData</div><div class="cb" style="left:31.2px;top:131.1px"></div><div class="sg" style="top:129.4px">&Sigma;</div><div class="ft" style="top:130.5px">Age</div><div class="cb on" style="left:31.2px;top:155.1px"></div><div class="ft b" style="top:154.5px">Date</div><div class="cb" style="left:31.2px;top:179.1px"></div><div class="sg" style="top:177.4px">&Sigma;</div><div class="ft" style="top:178.5px">Day_month</div><div class="cb" style="left:31.2px;top:203.1px"></div><div class="ft" style="top:202.5px">Education_level</div><div class="cb" style="left:31.2px;top:227.1px"></div><div class="sg" style="top:225.4px">&Sigma;</div><div class="ft" style="top:226.5px">Feedback</div><div class="cb" style="left:31.2px;top:251.1px"></div><div class="ft" style="top:250.5px">Gender</div><div class="cb" style="left:31.2px;top:275.1px"></div><div class="sg" style="top:273.4px">&Sigma;</div><div class="ft" style="top:274.5px">Income</div><div class="cb" style="left:31.2px;top:299.1px"></div><div class="sg" style="top:297.4px">&Sigma;</div><div class="ft" style="top:298.5px">Interest_rate</div><div class="cb on" style="left:31.2px;top:323.1px"></div><div class="sg" style="top:321.4px">&Sigma;</div><div class="ft" style="top:322.5px">Loan_disbursed</div><div class="cb" style="left:31.2px;top:347.1px"></div><div class="ft" style="top:346.5px">Month</div><div class="cb" style="left:31.2px;top:371.1px"></div><div class="ft" style="top:370.5px">Month Hierarchy</div><div class="cb" style="left:31.2px;top:395.1px"></div><div class="sg" style="top:393.4px">&Sigma;</div><div class="ft" style="top:394.5px">Outstanding_debt</div><div class="cb" style="left:31.2px;top:419.1px"></div><div class="sg" style="top:417.4px">&Sigma;</div><div class="ft" style="top:418.5px">Promo_Campaign</div><div class="cb on" style="left:31.2px;top:443.1px"></div><div class="ft" style="top:442.5px">Purpose</div><div class="cb" style="left:31.2px;top:467.1px"></div><div class="sg" style="top:465.4px">&Sigma;</div><div class="ft" style="top:466.5px">Quarter</div><div class="cb" style="left:31.2px;top:491.1px"></div><div class="ft" style="top:490.5px">Weekday</div><div class="cb" style="left:31.2px;top:515.1px"></div><div class="ft" style="top:514.5px">Weekday Hierarchy</div><div class="cb" style="left:39px;top:538.2px"></div><div class="ft" style="left:74px;top:537.3px">Weekday</div><svg class="vi" width="192" height="542" viewBox="956 89 192 542" fill="none" stroke="#252423" stroke-width="1.1"><circle cx="980.6" cy="153.4" r="4.9" stroke="#3b3a39"/><path d="M977 157L971.2 162.4" stroke="#3b3a39"/><path d="M959.6 199.4L965.3 193.8L971 199.4" stroke="#605e5c" stroke-width="1"/><rect x="978.4" y="191.5" width="12" height="10.8" fill="#fff" stroke="#252423" stroke-width="1.2"/><rect x="978.4" y="191.5" width="12" height="2.6" fill="#252423" stroke="none"/><path d="M982.4 194V202.3M986.4 194V202.3M978.4 196.8H990.4M978.4 199.5H990.4" stroke-width=".9"/><circle cx="990.8" cy="203.9" r="5.8" fill="#f2c811" stroke="none"/><path d="M988.1999999999999 204.1L990.0 205.9L993.5999999999999 202.1" stroke="#252423" stroke-width="1.3"/><path d="M990 250.2L992.2 252.3L996.2 248" stroke="#3b3a39" stroke-width="1"/><path d="M967.2 247.2L972.9 252.9L978.6 247.2" stroke="#605e5c" stroke-width="1"/><rect x="1003.4" y="244.4" width="11.4" height="11" rx="1" stroke-width="1.2"/><path d="M1003.4 247.4H1014.8" stroke-width="1.2"/><path d="M1006.1999999999999 242.8V245.4M1012.0 242.8V245.4" stroke-width="1.2"/><rect x="1005.4" y="249.0" width="1.6" height="1.6" fill="#252423" stroke="none"/><rect x="1005.4" y="251.8" width="1.6" height="1.6" fill="#252423" stroke="none"/><rect x="1008.3" y="249.0" width="1.6" height="1.6" fill="#252423" stroke="none"/><rect x="1008.3" y="251.8" width="1.6" height="1.6" fill="#252423" stroke="none"/><rect x="1011.2" y="249.0" width="1.6" height="1.6" fill="#252423" stroke="none"/><rect x="1011.2" y="251.8" width="1.6" height="1.6" fill="#252423" stroke="none"/><circle cx="1014.8" cy="257" r="5.8" fill="#f2c811" stroke="none"/><path d="M1012.1999999999999 257.2L1014.0 259L1017.5999999999999 255.2" stroke="#252423" stroke-width="1.3"/><path d="M990 418.2L992.2 420.3L996.2 416" stroke="#3b3a39" stroke-width="1"/><path d="M967.2 463.2L972.9 468.9L978.6 463.2" stroke="#605e5c" stroke-width="1"/><path d="M1005.6 464.6V470.6H1010.2M1005.6 466.2H1010.2" stroke-width="1"/><rect x="1003.5" y="460.4" width="4.2" height="4" fill="#f2c811" stroke="#3b3a39" stroke-width="1"/><rect x="1010.0" y="464.4" width="4.2" height="3.4" fill="#f2c811" stroke="#3b3a39" stroke-width="1"/><rect x="1010.0" y="469" width="4.2" height="3.4" fill="#f2c811" stroke="#3b3a39" stroke-width="1"/><path d="M990 538.2L992.2 540.3L996.2 536" stroke="#3b3a39" stroke-width="1"/><path d="M967.2 612.9L972.9 607.2L978.6 612.9" stroke="#605e5c" stroke-width="1"/><path d="M1005.6 608.6V614.6H1010.2M1005.6 610.2H1010.2" stroke-width="1"/><rect x="1003.5" y="604.4" width="4.2" height="4" fill="#f2c811" stroke="#3b3a39" stroke-width="1"/><rect x="1010.0" y="608.4" width="4.2" height="3.4" fill="#f2c811" stroke="#3b3a39" stroke-width="1"/><rect x="1010.0" y="613" width="4.2" height="3.4" fill="#f2c811" stroke="#3b3a39" stroke-width="1"/></svg></div>
<div class="abs" style="left:746.1px;top:440.9px;width:128.9px;height:62.8px;border:5px solid #3b45c4"></div>
<div id="tabs"><div class="abs" style="left:0;top:0;width:50.5px;height:33px;background:#fff"></div>
<div class="abs" style="left:0;top:32.6px;width:50.5px;height:2.4px;background:#e6c845"></div>
<div class="abs" style="left:-5.9px;top:11.2px;font-size:12.2px;line-height:14px;color:#3b3a39;white-space:nowrap;letter-spacing:-.5px">Page 1</div>
<div class="abs" style="left:50.6px;top:2px;width:39.3px;height:32px;background:#f1c917"></div>
<div class="abs" style="left:65.1px;top:17.3px;width:11px;height:2.6px;background:#74705a"></div>
<div class="abs" style="left:69.3px;top:13.1px;width:2.6px;height:11px;background:#74705a"></div></div>
<div id="status"></div>
</body>
</html>
